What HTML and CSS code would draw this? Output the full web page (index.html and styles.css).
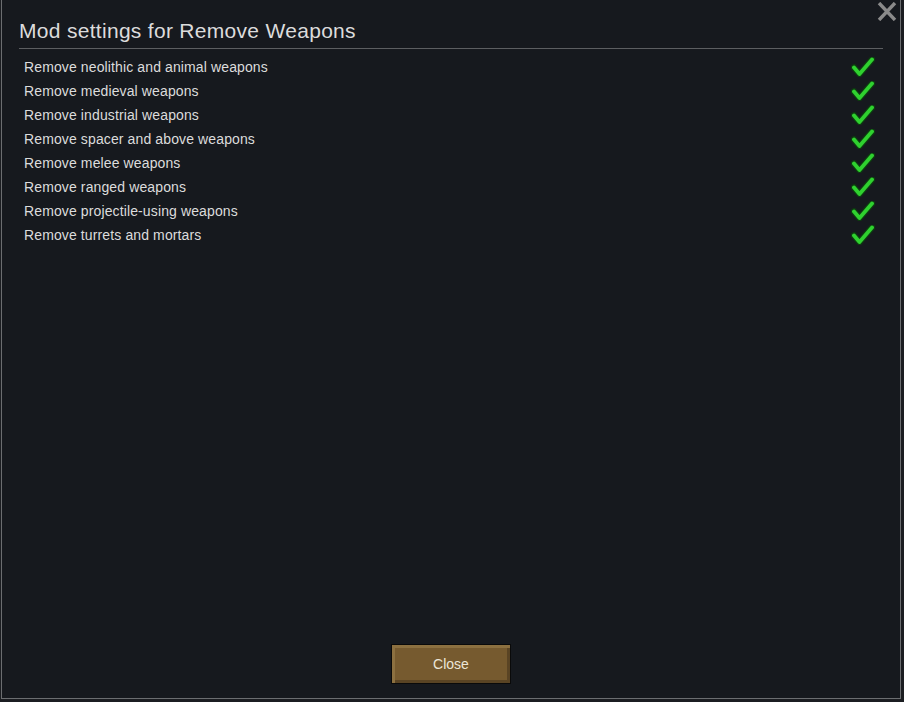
FILE: index.html
```html
<!DOCTYPE html>
<html lang="en">
<head>
  <meta charset="UTF-8">
  <title>Mod settings for Remove Weapons</title>
  <link rel="stylesheet" href="styles.css">
</head>
<body>
  <div class="window">
    <button class="close-x" type="button" aria-label="Close">
      <svg width="22" height="19" viewBox="0 0 22 19">
        <path d="M3 1 L19 18 M19 1 L3 18" stroke="#8a8a8a" stroke-width="3.4" fill="none"/>
      </svg>
    </button>

    <h1 class="title">Mod settings for Remove Weapons</h1>

    <div class="options">
      <div class="option"><span>Remove neolithic and animal weapons</span><i class="check"></i></div>
      <div class="option"><span>Remove medieval weapons</span><i class="check"></i></div>
      <div class="option"><span>Remove industrial weapons</span><i class="check"></i></div>
      <div class="option"><span>Remove spacer and above weapons</span><i class="check"></i></div>
      <div class="option"><span>Remove melee weapons</span><i class="check"></i></div>
      <div class="option"><span>Remove ranged weapons</span><i class="check"></i></div>
      <div class="option"><span>Remove projectile-using weapons</span><i class="check"></i></div>
      <div class="option"><span>Remove turrets and mortars</span><i class="check"></i></div>
    </div>

    <div class="footer">
      <button class="btn" type="button">Close</button>
    </div>
  </div>

  <script>
    // draw the same checkmark into every option row
    var tick = '<svg width="24" height="20" viewBox="0 0 24 20">' +
      '<polyline points="3,10.5 8.5,17 21,2.5" stroke="#0d3d10" stroke-width="6.5" fill="none" stroke-linecap="round" stroke-linejoin="round"/>' +
      '<polyline points="3,10.5 8.5,17 21,2.5" stroke="#2fd12f" stroke-width="3.8" fill="none" stroke-linecap="round" stroke-linejoin="round"/>' +
      '</svg>';
    document.querySelectorAll('.check').forEach(function (el) {
      el.innerHTML = tick;
    });
  </script>
</body>
</html>
```

FILE: styles.css
```css
:root {
  --panel: #16191e;
  --edge: #6b6d70;
  --text: #dcdcdc;
  --font: "Liberation Sans", Arial, sans-serif;
}

html, body {
  margin: 0;
  height: 100%;
}

body {
  background: #1b1d21;
  font-family: var(--font);
  padding-left: 1px;
  box-sizing: border-box;
}

.window {
  position: relative;
  width: 900px;
  height: 699px;
  box-sizing: border-box;
  background: var(--panel);
  border: 1px solid var(--edge);
  border-top: none;
  display: flex;
  flex-direction: column;
  padding: 19px 17px 14px 17px;
}

.close-x {
  position: absolute;
  top: 2px;
  right: 2px;
  background: none;
  border: none;
  padding: 0;
  cursor: pointer;
}

.title {
  margin: 0;
  font-size: 21px;
  font-weight: normal;
  letter-spacing: 0.3px;
  line-height: 24px;
  color: var(--text);
  padding-bottom: 5px;
  border-bottom: 1px solid #5c5e61;
  width: 864px;
}

.options {
  margin-top: 6px;
  padding-left: 5px;
  width: 851px;
}

.option {
  display: flex;
  justify-content: space-between;
  align-items: center;
  height: 24px;
  font-size: 14px;
  letter-spacing: 0.12px;
  color: var(--text);
}

.check {
  display: block;
  width: 24px;
  height: 20px;
}

.footer {
  margin-top: auto;
  display: flex;
  justify-content: center;
}

.btn {
  width: 120px;
  height: 40px;
  font-family: var(--font);
  font-size: 14px;
  color: #ece6d8;
  background: #765a2f;
  border: 1px solid #0a0a0a;
  box-shadow: inset 3px 3px 0 #8c7040, inset -3px -3px 0 #5a4424;
  cursor: pointer;
}
```
